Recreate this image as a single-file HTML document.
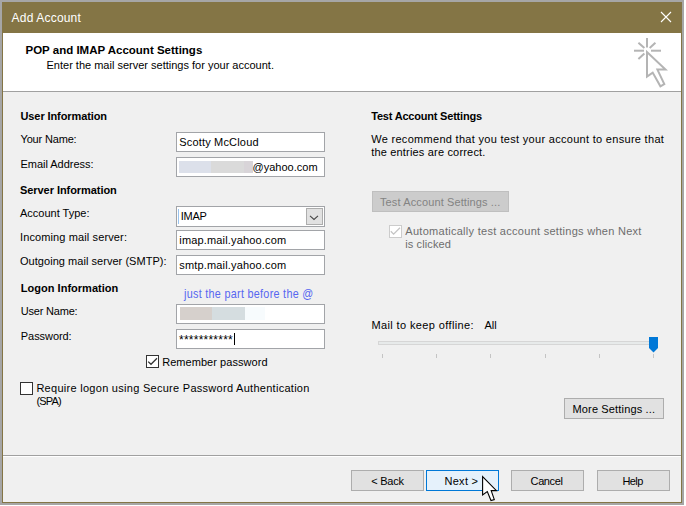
<!DOCTYPE html>
<html><head><meta charset="utf-8"><style>
html,body{margin:0;padding:0;}
body{width:686px;height:506px;position:relative;overflow:hidden;background:#fff;font-family:"Liberation Sans", sans-serif;}
body>div{position:absolute;}
.t{white-space:pre;}
</style></head><body>
<div style="left:0px;top:0px;width:684px;height:505px;background:#a6a6a6;"></div>
<div style="left:2px;top:2px;width:680px;height:501px;background:#847545;"></div>
<div style="left:3px;top:33px;width:678px;height:469px;background:#f0f0f0;"></div>
<div style="left:3px;top:33px;width:678px;height:58px;background:#ffffff;"></div>
<div style="left:3px;top:91px;width:678px;height:1px;background:#a0a0a0;"></div>
<div style="left:3px;top:455px;width:678px;height:1px;background:#a0a0a0;"></div>
<div style="left:3px;top:456px;width:678px;height:1px;background:#ffffff;"></div>
<div class="t" style="left:11.6px;top:10.64px;font-size:12px;line-height:14px;color:#fff;letter-spacing:0.180px;">Add Account</div>
<svg style="position:absolute;left:660px;top:11px" width="12" height="12" viewBox="0 0 12 12"><path d="M1 1L11 11M11 1L1 11" stroke="#fff" stroke-width="1.1" fill="none"/></svg>
<div class="t" style="left:25.5px;top:44.12px;font-size:11.5px;line-height:13px;color:#000;font-weight:bold;">POP and IMAP Account Settings</div>
<div class="t" style="left:46.5px;top:59.19px;font-size:11px;line-height:13px;color:#000;">Enter the mail server settings for your account.</div>
<svg style="position:absolute;left:626px;top:32px" width="50" height="60" viewBox="626 32 50 60">
<g stroke="#b4b4b4" stroke-width="2" fill="none" stroke-linecap="butt">
<path d="M647 38V47.5"/><path d="M634 50.7H644"/><path d="M651 50.7H661"/>
<path d="M638.4 42.7L644.4 48"/><path d="M649.7 48L655.4 42.7"/><path d="M638.4 59L644.4 53.6"/>
<path d="M647 52V76.5L652.7 72.6L660.4 86.3L664.3 84L657.4 69.6H665.5L647 52Z" stroke-linejoin="miter"/>
</g></svg>
<div class="t" style="left:20.5px;top:110.09px;font-size:11px;line-height:13px;color:#000;font-weight:bold;letter-spacing:-0.100px;">User Information</div>
<div class="t" style="left:20.5px;top:132.69px;font-size:11px;line-height:13px;color:#000;letter-spacing:-0.170px;">Your Name:</div>
<div class="t" style="left:20.5px;top:157.69px;font-size:11px;line-height:13px;color:#000;letter-spacing:-0.030px;">Email Address:</div>
<div class="t" style="left:20px;top:184.09px;font-size:11px;line-height:13px;color:#000;font-weight:bold;letter-spacing:-0.060px;">Server Information</div>
<div class="t" style="left:20px;top:206.89px;font-size:11px;line-height:13px;color:#000;">Account Type:</div>
<div class="t" style="left:20px;top:230.89px;font-size:11px;line-height:13px;color:#000;letter-spacing:0.120px;">Incoming mail server:</div>
<div class="t" style="left:20px;top:255.49px;font-size:11px;line-height:13px;color:#000;letter-spacing:0.040px;">Outgoing mail server (SMTP):</div>
<div class="t" style="left:20.8px;top:281.79px;font-size:11px;line-height:13px;color:#000;font-weight:bold;letter-spacing:0.020px;">Logon Information</div>
<div class="t" style="left:20.8px;top:304.59px;font-size:11px;line-height:13px;color:#000;letter-spacing:-0.200px;">User Name:</div>
<div class="t" style="left:20.8px;top:329.79px;font-size:11px;line-height:13px;color:#000;letter-spacing:-0.060px;">Password:</div>
<div style="left:176px;top:132px;width:149px;height:20px;background:#fff;box-sizing:border-box;border:1px solid #a2a4a8;"></div>
<div style="left:176px;top:157px;width:149px;height:20px;background:#fff;box-sizing:border-box;border:1px solid #a2a4a8;"></div>
<div style="left:176px;top:230px;width:149px;height:20px;background:#fff;box-sizing:border-box;border:1px solid #a2a4a8;"></div>
<div style="left:176px;top:255px;width:149px;height:20px;background:#fff;box-sizing:border-box;border:1px solid #a2a4a8;"></div>
<div style="left:176px;top:304px;width:149px;height:20px;background:#fff;box-sizing:border-box;border:1px solid #a2a4a8;"></div>
<div style="left:176px;top:329px;width:149px;height:20px;background:#fff;box-sizing:border-box;border:1px solid #a2a4a8;"></div>
<div style="left:176px;top:206px;width:149px;height:21px;background:#fff;box-sizing:border-box;border:1px solid #a2a4a8;"></div>
<div style="left:306px;top:208px;width:17px;height:17px;background:#e1e1e1;box-sizing:border-box;border:1px solid #adadad;"></div>
<svg style="position:absolute;left:306px;top:208px" width="17" height="17" viewBox="0 0 17 17"><path d="M4 7.8L8 11.5L12 7.8" stroke="#454545" stroke-width="1.05" fill="none"/></svg>
<div style="left:178px;top:209px;width:1px;height:15px;background:#99c4ef;"></div>
<div class="t" style="left:179.3px;top:136.09px;font-size:11px;line-height:13px;color:#000;letter-spacing:0.170px;">Scotty McCloud</div>
<div style="left:179px;top:161px;width:32px;height:12px;background:#dce0ea;"></div>
<div style="left:211px;top:161px;width:33px;height:12px;background:#dadada;"></div>
<div style="left:244px;top:161px;width:9px;height:12px;background:#d8d4d8;"></div>
<div class="t" style="left:252.5px;top:161.19px;font-size:11px;line-height:13px;color:#000;letter-spacing:0.020px;">@yahoo.com</div>
<div class="t" style="left:180.7px;top:210.29px;font-size:11px;line-height:13px;color:#000;letter-spacing:-0.250px;">IMAP</div>
<div class="t" style="left:179.3px;top:234.09px;font-size:11px;line-height:13px;color:#000;letter-spacing:0.160px;">imap.mail.yahoo.com</div>
<div class="t" style="left:179.3px;top:258.79px;font-size:11px;line-height:13px;color:#000;letter-spacing:0.160px;">smtp.mail.yahoo.com</div>
<div style="left:180px;top:307px;width:32px;height:13px;background:#d6d0cc;"></div>
<div style="left:212px;top:307px;width:33px;height:13px;background:#d5dde0;"></div>
<div style="left:245px;top:307px;width:20px;height:13px;background:#f7fbfd;"></div>
<div class="t" style="left:179px;top:334.14px;font-size:12px;line-height:13px;color:#000;letter-spacing:0.240px;">***********</div>
<div style="left:234px;top:333px;width:1px;height:12px;background:#000;"></div>
<div class="t" style="left:184px;top:285.62px;font-size:13.5px;line-height:16px;color:#5767f0;letter-spacing:0.360px;transform:scaleX(0.8);transform-origin:0 0;">just the part before the @</div>
<div style="left:146px;top:355px;width:13px;height:13px;background:#fff;box-sizing:border-box;border:1px solid #333;"></div>
<svg style="position:absolute;left:146px;top:355px" width="13" height="13" viewBox="0 0 13 13"><path d="M2.2 6.6L5 9.3L11 3.3" stroke="#333" stroke-width="1.3" fill="none"/></svg>
<div class="t" style="left:162.2px;top:356.19px;font-size:11px;line-height:13px;color:#000;letter-spacing:0.050px;">Remember password</div>
<div style="left:20px;top:382px;width:13px;height:13px;background:#fff;box-sizing:border-box;border:1px solid #333;"></div>
<div class="t" style="left:36.4px;top:381.79px;font-size:11px;line-height:13px;color:#000;letter-spacing:0.280px;">Require logon using Secure Password Authentication</div>
<div class="t" style="left:36.4px;top:394.99px;font-size:11px;line-height:13px;color:#000;letter-spacing:-0.800px;">(SPA)</div>
<div class="t" style="left:371.2px;top:110.29px;font-size:11px;line-height:13px;color:#000;font-weight:bold;letter-spacing:-0.200px;">Test Account Settings</div>
<div class="t" style="left:371.2px;top:132.79px;font-size:11px;line-height:13px;color:#000;letter-spacing:0.300px;">We recommend that you test your account to ensure that</div>
<div class="t" style="left:371.2px;top:145.69px;font-size:11px;line-height:13px;color:#000;letter-spacing:0.180px;">the entries are correct.</div>
<div style="left:372px;top:191px;width:137px;height:21px;background:#cccccc;box-sizing:border-box;border:1px solid #bfbfbf;"></div>
<div class="t" style="left:380px;top:195.69px;font-size:11px;line-height:13px;color:#838383;letter-spacing:0.120px;">Test Account Settings ...</div>
<div style="left:389px;top:225px;width:13px;height:13px;background:#ffffff;box-sizing:border-box;border:1px solid #cccccc;"></div>
<svg style="position:absolute;left:389px;top:225px" width="13" height="13" viewBox="0 0 13 13"><path d="M1.8 6.2L4.6 9.1L11 2.8" stroke="#c4c4c4" stroke-width="1.3" fill="none"/></svg>
<div class="t" style="left:405.3px;top:224.79px;font-size:11px;line-height:13px;color:#6d6d6d;letter-spacing:0.280px;">Automatically test account settings when Next</div>
<div class="t" style="left:405.3px;top:237.69px;font-size:11px;line-height:13px;color:#6d6d6d;letter-spacing:0.100px;">is clicked</div>
<div class="t" style="left:371.5px;top:318.79px;font-size:11px;line-height:13px;color:#000;letter-spacing:0.380px;">Mail to keep offline:</div>
<div class="t" style="left:484.4px;top:318.79px;font-size:11px;line-height:13px;color:#000;letter-spacing:0.050px;">All</div>
<div style="left:378px;top:341px;width:272px;height:4px;background:#e7eaea;box-sizing:border-box;border:1px solid #d6d6d6;"></div>
<div style="left:382px;top:354px;width:1px;height:4px;background:#c4c4c4;"></div>
<div style="left:436px;top:354px;width:1px;height:4px;background:#c4c4c4;"></div>
<div style="left:490px;top:354px;width:1px;height:4px;background:#c4c4c4;"></div>
<div style="left:545px;top:354px;width:1px;height:4px;background:#c4c4c4;"></div>
<div style="left:599px;top:354px;width:1px;height:4px;background:#c4c4c4;"></div>
<div style="left:653px;top:354px;width:1px;height:4px;background:#c4c4c4;"></div>
<svg style="position:absolute;left:648px;top:336px" width="11" height="18" viewBox="0 0 11 18"><path d="M1 1H10V12L5.5 16.4L1 12Z" fill="#0078d7"/></svg>
<div style="left:564px;top:398px;width:100px;height:21px;background:#e1e1e1;box-sizing:border-box;border:1px solid #adadad;"></div>
<div class="t" style="left:572.5px;top:402.99px;font-size:11px;line-height:13px;color:#000;letter-spacing:0.150px;">More Settings ...</div>
<div style="left:351px;top:470px;width:73px;height:21px;background:#e1e1e1;box-sizing:border-box;border:1px solid #adadad;"></div>
<div class="t" style="left:371.3px;top:474.99px;font-size:11px;line-height:13px;color:#000;letter-spacing:-0.250px;">&lt; Back</div>
<div style="left:426px;top:470px;width:73px;height:21px;background:#e5f1fb;box-sizing:border-box;border:1px solid #0078d7;"></div>
<div class="t" style="left:444.5px;top:474.99px;font-size:11px;line-height:13px;color:#000;letter-spacing:0.280px;">Next &gt;</div>
<div style="left:511px;top:470px;width:73px;height:21px;background:#e1e1e1;box-sizing:border-box;border:1px solid #adadad;"></div>
<div class="t" style="left:530.6px;top:474.99px;font-size:11px;line-height:13px;color:#000;letter-spacing:-0.400px;">Cancel</div>
<div style="left:597px;top:470px;width:73px;height:21px;background:#e1e1e1;box-sizing:border-box;border:1px solid #adadad;"></div>
<div class="t" style="left:622.4px;top:474.99px;font-size:11px;line-height:13px;color:#000;letter-spacing:-0.580px;">Help</div>
<svg style="position:absolute;left:481px;top:475px" width="18" height="28" viewBox="0 0 18 28"><path d="M1.6 1.6V20L6.3 16.5L10 25.5L13.3 24.6L10.2 15.6H15.4Z" fill="#fff" stroke="#000" stroke-width="1.1" stroke-linejoin="miter"/></svg>
</body></html>
